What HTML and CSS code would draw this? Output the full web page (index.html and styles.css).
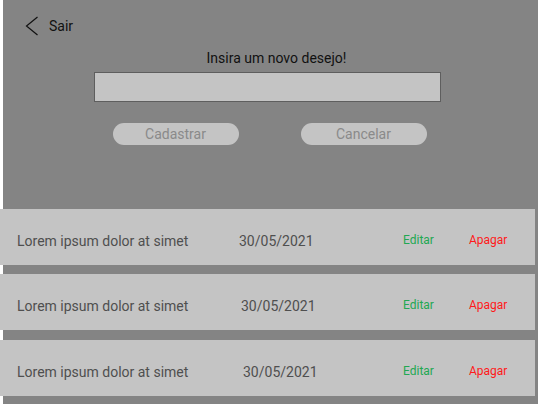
FILE: index.html
```html
<!DOCTYPE html>
<html lang="pt">
<head>
<meta charset="utf-8">
<link rel="stylesheet" href="styles.css">
</head>
<body>
<div class="panel">
  <header class="top">
    <svg class="back" width="14" height="20" viewBox="0 0 14 20"><path d="M12.5 1 L1.5 10 L12.5 19" fill="none" stroke="#111" stroke-width="1.2"/></svg>
    <span class="sair">Sair</span>
  </header>
  <section class="form">
    <p class="title">Insira um novo desejo!</p>
    <input class="field" type="text">
    <div class="actions">
      <button class="btn">Cadastrar</button>
      <button class="btn">Cancelar</button>
    </div>
  </section>
  <ul class="list">
    <li class="row"><span class="name">Lorem ipsum dolor at simet</span><span class="date">30/05/2021</span><span class="edit">Editar</span><span class="del">Apagar</span></li>
    <li class="row r2"><span class="name">Lorem ipsum dolor at simet</span><span class="date">30/05/2021</span><span class="edit">Editar</span><span class="del">Apagar</span></li>
    <li class="row r3"><span class="name">Lorem ipsum dolor at simet</span><span class="date">30/05/2021</span><span class="edit">Editar</span><span class="del">Apagar</span></li>
  </ul>
</div>
</body>
</html>
```
FILE: styles.css
```css
html, body {
  margin: 0;
  padding: 0;
  background: #ffffff;
  font-family: Roboto, "Liberation Sans", sans-serif;
  overflow: hidden;
}
.panel {
  margin-left: 3px;
  width: 535px;
  height: 404px;
  background: #848484;
}
.top {
  display: flex;
  align-items: center;
  height: 26px;
  padding: 13px 0 0 22px;
}
.back {
  display: block;
}
.sair {
  margin-left: 10px;
  font-size: 14px;
  color: #111;
}
.form {
  display: flex;
  flex-direction: column;
  align-items: center;
}
.title {
  margin: 11px 0 0 12px;
  font-size: 14px;
  line-height: 16px;
  color: #111;
}
.field {
  box-sizing: border-box;
  margin: 6px 0 0 -6px;
  width: 347px;
  height: 30px;
  background: #c4c4c4;
  border: 1px solid #5e5e5e;
  padding: 0;
}
.actions {
  display: flex;
  gap: 62px;
  margin: 21px 0 0 -2px;
}
.btn {
  width: 126px;
  height: 22px;
  border: none;
  border-radius: 11px;
  background: #c4c4c4;
  color: #8a8a8a;
  font-family: Roboto, "Liberation Sans", sans-serif;
  font-size: 14px;
  padding: 0;
}
.list {
  list-style: none;
  margin: 64px 0 0 -3px;
  padding: 0;
  display: flex;
  flex-direction: column;
  gap: 9px;
}
.row {
  width: 535px;
  height: 56px;
  background: #c4c4c4;
  display: flex;
  align-items: center;
  padding-top: 8px;
  box-sizing: border-box;
}
.r3 { margin-top: 1px; }
.name {
  margin-left: 17px;
  width: 222px;
  font-size: 14px;
  color: #4f4f4f;
}
.date {
  width: 164px;
  font-size: 14px;
  color: #4f4f4f;
}
.r2 .date { margin-left: 2px; width: 162px; }
.r3 .date { margin-left: 4px; width: 160px; }
.edit {
  width: 66px;
  font-size: 12px;
  color: #22a852;
  margin-top: -2px;
}
.del {
  font-size: 12px;
  color: #ff1a1a;
  margin-top: -2px;
}
```
